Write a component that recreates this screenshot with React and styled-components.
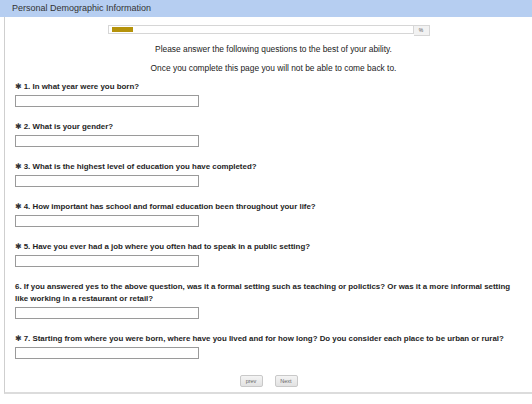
import React from "react";
import styled, { createGlobalStyle } from "styled-components";

const GlobalStyle = createGlobalStyle`
  html, body {
    margin: 0;
    padding: 0;
    background: #fff;
  }
  body {
    font-family: "Liberation Sans", Arial, sans-serif;
    color: #222;
  }
`;

const Page = styled.div`
  width: 532px;
  height: 404px;
  overflow: hidden;
`;

const Header = styled.div`
  height: 17px;
  background: #b6cef1;
  color: #333;
  font-size: 9px;
  line-height: 17px;
  padding-left: 12px;
`;

const Panel = styled.div`
  margin-left: 4px;
  border-left: 1px solid #cfcfcf;
  border-bottom: 2px solid #dcdcdc;
  padding: 8px 0 5px 10px;
`;

const ProgressRow = styled.div`
  display: flex;
  justify-content: center;
  padding-right: 10px;
`;

const Track = styled.div`
  width: 298px;
  height: 5px;
  padding: 1px 3px;
  border: 1px solid #d6d6d6;
  background: #fff;
`;

const Fill = styled.div`
  height: 5px;
  background: #b5930b;
`;

const Percent = styled.div`
  width: 15px;
  height: 7px;
  border: 1px solid #d6d6d6;
  border-left: none;
  background: #f2f2f2;
  font-size: 5px;
  line-height: 7px;
  text-align: center;
  color: #555;
  padding: 1px 0;
`;

const Intro = styled.p`
  margin: 7px 0 0 0;
  font-size: 8.4px;
  line-height: 12px;
  text-align: center;
  color: #222;
`;

const QuestionList = styled.div`
  margin-top: 7px;
`;

const Question = styled.div`
  margin-bottom: 14px;
`;

const Label = styled.div`
  font-size: 7.9px;
  font-weight: bold;
  line-height: 12px;
  color: #1e1e1e;
  margin-bottom: 2px;
`;

const Star = styled.span`
  font-family: "DejaVu Sans", sans-serif;
  font-size: 8px;
  font-weight: bold;
  color: #333;
  margin-right: 2px;
`;

const TextInput = styled.input`
  display: block;
  box-sizing: border-box;
  width: 184px;
  height: 12px;
  margin: 0;
  padding: 0;
  border: 1px solid #9a9a9a;
  background: #fff;
`;

const Buttons = styled.div`
  display: flex;
  justify-content: center;
  gap: 12px;
  padding-right: 10px;
  margin-top: 16px;
`;

const NavButton = styled.button`
  box-sizing: border-box;
  height: 12px;
  padding: 0 4px;
  min-width: 23px;
  border: 1px solid #c9c9c9;
  border-radius: 2px;
  background: linear-gradient(#f4f4f4, #e2e2e2);
  font-family: "Liberation Sans", Arial, sans-serif;
  font-size: 5.5px;
  line-height: 10px;
  color: #666;
`;

const questions = [
  { req: true, text: "1. In what year were you born?" },
  { req: true, text: "2. What is your gender?" },
  { req: true, text: "3. What is the highest level of education you have completed?" },
  { req: true, text: "4. How important has school and formal education been throughout your life?" },
  { req: true, text: "5. Have you ever had a job where you often had to speak in a public setting?" },
  {
    req: false,
    text: [
      "6. If you answered yes to the above question, was it a formal setting such as teaching or polictics? Or was it a more  informal setting",
      "like working in a restaurant or retail?",
    ],
  },
  {
    req: true,
    text: "7. Starting from where you were born, where have you lived and for how long? Do you consider each place to be urban or rural?",
  },
];

export default function App() {
  return (
    <Page>
      <GlobalStyle />
      <Header>Personal Demographic Information</Header>
      <Panel>
        <ProgressRow>
          <Track>
            <Fill style={{ width: "21px" }} />
          </Track>
          <Percent>%</Percent>
        </ProgressRow>
        <Intro>Please answer the following questions to the best of your ability.</Intro>
        <Intro>Once you complete this page you will not be able to come back to.</Intro>
        <QuestionList>
          {questions.map((q, i) => (
            <Question key={i}>
              <Label>
                {q.req && <Star>✱</Star>}
                {Array.isArray(q.text) ? (
                  <>
                    {q.text[0]}
                    <br />
                    {q.text[1]}
                  </>
                ) : (
                  q.text
                )}
              </Label>
              <TextInput type="text" />
            </Question>
          ))}
        </QuestionList>
        <Buttons>
          <NavButton>prev</NavButton>
          <NavButton>Next</NavButton>
        </Buttons>
      </Panel>
    </Page>
  );
}
